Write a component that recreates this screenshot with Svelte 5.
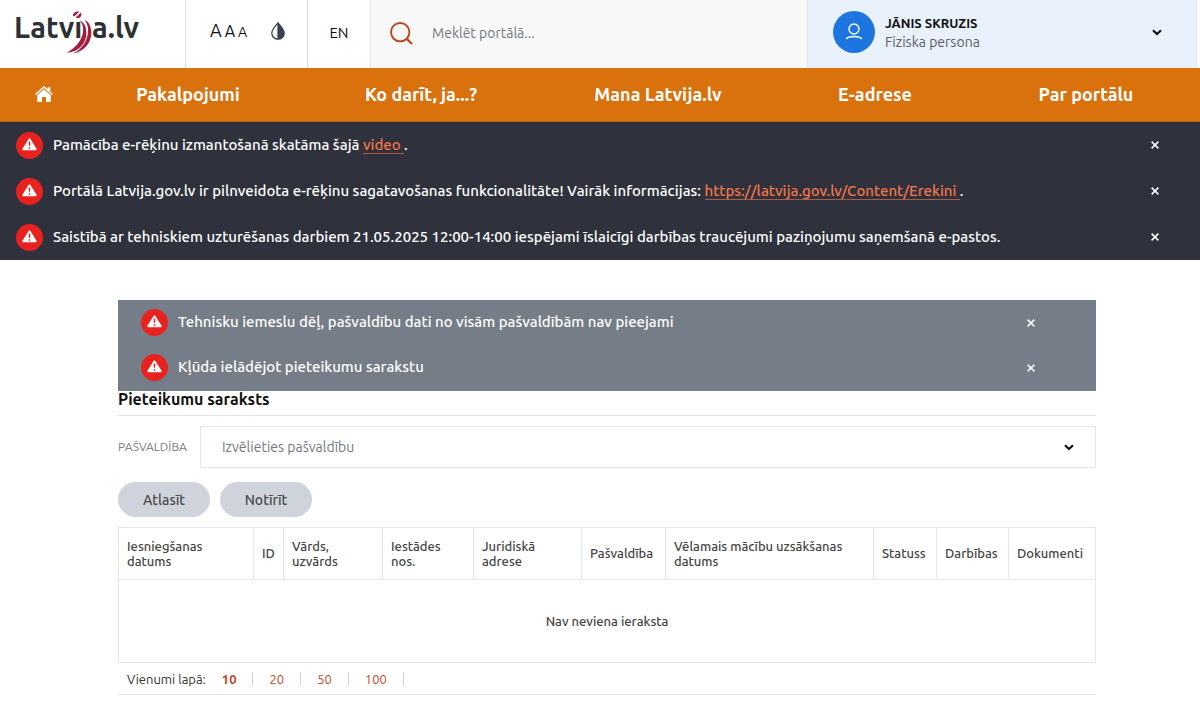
<script>
  const nav = ['Pakalpojumi', 'Ko darīt, ja...?', 'Mana Latvija.lv', 'E-adrese', 'Par portālu'];

  let siteNotices = $state([
    { text: 'Pamācība e-rēķinu izmantošanā skatāma šajā', link: 'video' },
    {
      text: 'Portālā Latvija.gov.lv ir pilnveidota e-rēķinu sagatavošanas funkcionalitāte! Vairāk informācijas:',
      link: 'https://latvija.gov.lv/Content/Erekini'
    },
    { text: 'Saistībā ar tehniskiem uzturēšanas darbiem 21.05.2025 12:00-14:00 iespējami īslaicīgi darbības traucējumi paziņojumu saņemšanā e-pastos.' }
  ]);

  let pageNotices = $state([
    { text: 'Tehnisku iemeslu dēļ, pašvaldību dati no visām pašvaldībām nav pieejami' },
    { text: 'Kļūda ielādējot pieteikumu sarakstu' }
  ]);

  const columns = [
    { title: 'Iesniegšanas\ndatums', share: 135 },
    { title: 'ID', share: 30 },
    { title: 'Vārds,\nuzvārds', share: 99 },
    { title: 'Iestādes\nnos.', share: 91 },
    { title: 'Juridiskā\nadrese', share: 108 },
    { title: 'Pašvaldība', share: 84 },
    { title: 'Vēlamais mācību uzsākšanas\ndatums', share: 208 },
    { title: 'Statuss', share: 63 },
    { title: 'Darbības', share: 72 },
    { title: 'Dokumenti', share: 87 }
  ];
  const total = columns.reduce((sum, c) => sum + c.share, 0);

  const sizes = [10, 20, 50, 100];
  let size = $state(10);
</script>

{#snippet chevron()}
  <svg class="chevron" viewBox="0 0 10 7" width="10" height="7" aria-hidden="true">
    <path d="M1 1.2 L5 5 L9 1.2" fill="none" stroke="#111" stroke-width="2.2" />
  </svg>
{/snippet}

{#snippet notice(item, close)}
  <div class="notice">
    <svg class="alert" viewBox="0 0 27 27" width="27" height="27" aria-hidden="true">
      <circle cx="13.5" cy="13.5" r="13.5" fill="#e8231f" />
      <path d="M13.5 7.3 L19.8 17.3 H7.2 Z" fill="#fff" stroke="#fff" stroke-width="1.8" stroke-linejoin="round" />
      <path d="M13.5 9.4 V13.8 M13.5 15.2 V16.8" stroke="#e8231f" stroke-width="1.5" />
    </svg>
    <p>
      {item.text}
      {#if item.link}<a href="#notice">{item.link}&nbsp;</a>.{/if}
    </p>
    <button class="close" type="button" aria-label="Aizvērt" onclick={close}>
      <svg viewBox="0 0 8 8" width="8" height="8" aria-hidden="true">
        <path d="M0.6 0.6 L7.4 7.4 M7.4 0.6 L0.6 7.4" stroke="#fff" stroke-width="1.5" />
      </svg>
    </button>
  </div>
{/snippet}

<header class="top">
  <a class="logo" href="#home" aria-label="Latvija.lv">
    <svg viewBox="0 0 128 48" width="128" height="48">
      <text x="-2" y="30">Latvı</text>
      <text x="76" y="30">a.lv</text>
      <g fill="#a61c3c">
        <path d="M57 7 C57.4 4.4 60.6 3 63.4 3.8 L58.2 8.6 C57.4 8.3 57 7.8 57 7 Z" />
        <path d="M64.8 4.4 C66 6.2 65.4 8.4 63.8 9.4 C62.4 10.2 60.8 10 59.8 9.4 Z" />
        <path d="M63.4 12.4 C69.6 17 69.6 34.5 51 44.4 C61.4 44.6 70.2 35.6 70.4 25.4 C70.5 18.4 67.8 13.4 63.4 12.4 Z" />
        <path d="M68.4 12.2 C75 18 73.6 37.6 57 45.6 C68.6 43.4 75.4 34 75.3 25.2 C75.2 18.2 72.6 12.8 68.4 12.2 Z" />
      </g>
    </svg>
  </a>
  <div class="access">
    <div class="sizes">
      <button class="a-large" type="button">A</button>
      <button class="a-medium" type="button">A</button>
      <button class="a-small" type="button">A</button>
    </div>
    <button class="contrast" type="button" aria-label="Kontrasts">
      <svg viewBox="0 0 14 18" width="14" height="18" aria-hidden="true">
        <path d="M7 0.8 C9 3.6 13.2 7.2 13.2 11 C13.2 14.8 10.4 17.2 7 17.2 C3.6 17.2 0.8 14.8 0.8 11 C0.8 7.2 5 3.6 7 0.8 Z" fill="#fff" stroke="#3a3f50" stroke-width="1.3" />
        <path d="M6.4 0.8 H7 C9 3.6 13.2 7.2 13.2 11 C13.2 14.8 10.4 17.2 6.4 17.2 Z" fill="#3a3f50" />
      </svg>
    </button>
  </div>
  <a class="lang" href="#en">EN</a>
  <form class="search" role="search">
    <button type="submit" aria-label="Meklēt">
      <svg viewBox="0 0 23 23" width="23" height="23" aria-hidden="true">
        <circle cx="10.2" cy="10.2" r="9.2" fill="none" stroke="#c1441f" stroke-width="1.9" />
        <path d="M16.6 16.6 L22 22" stroke="#c1441f" stroke-width="2.2" />
      </svg>
    </button>
    <input type="text" placeholder="Meklēt portālā..." aria-label="Meklēt portālā" />
  </form>
  <button class="user" type="button">
    <svg viewBox="0 0 42 42" width="42" height="42" aria-hidden="true">
      <circle cx="21" cy="21" r="21" fill="#1d76e0" />
      <g fill="none" stroke="#fff" stroke-width="1.4">
        <circle cx="21" cy="18" r="5" />
        <path d="M13.2 28 C15.5 24.6 26.5 24.6 28.8 28" />
      </g>
    </svg>
    <span class="who">
      <strong>JĀNIS SKRUZIS</strong>
      <span>Fiziska persona</span>
    </span>
    {@render chevron()}
  </button>
</header>

<nav>
  <a href="#home" aria-label="Sākums">
    <svg viewBox="0 0 18 16" width="18" height="16" aria-hidden="true">
      <path d="M9 0 L12.6 3.3 V1.2 H15.3 V5.7 L18 8 L17 9 L9 2 L1 9 L0 8 Z" fill="#fff" />
      <path d="M9 3.2 L15.8 9.2 V16 H11 V11 H7 V16 H2.2 V9.2 Z" fill="#fff" />
    </svg>
  </a>
  {#each nav as item}
    <a href="#nav">{item}</a>
  {/each}
</nav>

<section class="site-notices">
  {#each siteNotices as item, i}
    {@render notice(item, () => siteNotices.splice(i, 1))}
  {/each}
</section>

<main>
  <section class="page-notices">
    {#each pageNotices as item, i}
      {@render notice(item, () => pageNotices.splice(i, 1))}
    {/each}
  </section>

  <h1>Pieteikumu saraksts</h1>

  <div class="filter">
    <label for="municipality">PAŠVALDĪBA</label>
    <div class="select">
      <select id="municipality">
        <option>Izvēlieties pašvaldību</option>
      </select>
      {@render chevron()}
    </div>
  </div>

  <div class="actions">
    <button type="button">Atlasīt</button>
    <button type="button">Notīrīt</button>
  </div>

  <table>
    <colgroup>
      {#each columns as c}
        <col style="width: {(c.share / total) * 100}%" />
      {/each}
    </colgroup>
    <thead>
      <tr>
        {#each columns as c}
          <th scope="col">{c.title}</th>
        {/each}
      </tr>
    </thead>
    <tbody>
      <tr><td colspan={columns.length}>Nav neviena ieraksta</td></tr>
    </tbody>
  </table>

  <div class="pager">
    <span>Vienumi lapā:</span>
    <ul>
      {#each sizes as n}
        <li><button type="button" class:current={n === size} onclick={() => (size = n)}>{n}</button></li>
      {/each}
    </ul>
  </div>
</main>

<style>
  :global(body) {
    background: #fff;
    color: #111;
    font: 14px/16px Ubuntu, 'Noto Sans', sans-serif;
  }
  :global(*) {
    box-sizing: border-box;
  }
  button {
    border: 0;
    padding: 0;
    background: none;
    color: inherit;
    font: inherit;
    cursor: pointer;
  }
  a {
    color: inherit;
    text-decoration: none;
  }
  svg {
    display: block;
    flex: none;
  }

  .top {
    display: flex;
    height: 68px;
    padding-right: 3px;
  }
  .logo {
    flex: none;
    width: 186px;
    padding: 8px 0 0 16px;
    border-right: 1px solid #dde0e8;
  }
  .logo svg {
    overflow: visible;
  }
  .logo text {
    font: 700 29px Ubuntu, 'Open Sans', sans-serif;
    fill: #2e3133;
  }
  .access {
    flex: none;
    display: flex;
    align-items: center;
    justify-content: space-between;
    width: 122px;
    padding: 0 22px 6px 24px;
    border-right: 1px solid #d5d8df;
  }
  .sizes {
    display: flex;
    align-items: baseline;
    gap: 3px;
  }
  .a-large {
    font-size: 18px;
  }
  .a-medium {
    font-size: 16px;
  }
  .a-small {
    font-size: 14px;
  }
  .lang {
    flex: none;
    display: flex;
    align-items: center;
    justify-content: center;
    width: 63px;
    padding-bottom: 2px;
    border-right: 1px solid #e6e8f0;
    font-size: 15px;
  }
  .search {
    flex: 1;
    display: flex;
    align-items: center;
    gap: 19px;
    padding: 0 19px 2px;
    background: #f8f8f8;
  }
  .search input {
    flex: 1;
    min-width: 0;
    border: 0;
    padding: 0;
    background: none;
    font: inherit;
  }
  .search input::placeholder {
    color: #737982;
    opacity: 1;
  }
  .user {
    flex: none;
    display: flex;
    align-items: center;
    gap: 10px;
    width: 33%;
    max-width: 390px;
    padding: 0 34px 4px 25px;
    border: solid #dfe5ef;
    border-width: 0 1px;
    background: #e9f1fc;
    text-align: left;
  }
  .who {
    flex: 1;
    display: grid;
    gap: 3px;
  }
  .who strong {
    font-size: 13px;
    font-weight: 700;
  }
  .who span {
    color: #5c6066;
  }

  nav {
    display: grid;
    grid-template-columns: 88fr 200fr 266fr 208fr 226fr 196fr;
    align-items: center;
    justify-items: center;
    height: 54px;
    padding: 0 16px 2px 0;
    border-bottom: 1px solid #c56a12;
    background: #d9710d;
    color: #fff;
    font-size: 18px;
    font-weight: 700;
    line-height: 24px;
  }

  .site-notices {
    background: #2f323d;
    padding: 0 41px 0 16px;
  }
  .page-notices {
    background: #757d88;
    padding: 0 61px 1px 23px;
  }
  .notice {
    display: flex;
    align-items: center;
    gap: 10px;
    height: 46px;
    color: #fff;
    font-size: 15px;
    font-weight: 500;
  }
  .page-notices .notice {
    height: 45px;
  }
  .notice p {
    flex: 1;
    margin: 0;
    padding-bottom: 1px;
  }
  .notice a {
    border-bottom: 1px solid #b3593c;
    color: #f0754a;
  }
  .close {
    display: grid;
    place-items: center;
    width: 8px;
    height: 24px;
  }

  main {
    padding: 40px 104px 0 118px;
  }
  h1 {
    margin: 0;
    padding-bottom: 7px;
    border-bottom: 1px solid #e4e5ea;
    font-size: 16px;
    font-weight: 700;
    line-height: 17px;
  }
  .filter {
    display: flex;
    align-items: center;
    gap: 13px;
    padding: 10px 0 14px;
    color: #737982;
  }
  .filter label {
    flex: none;
    width: 69px;
    font-size: 12px;
  }
  .select {
    flex: 1;
    display: grid;
    align-items: center;
  }
  .select > :global(*) {
    grid-area: 1 / 1;
  }
  .select .chevron {
    justify-self: end;
    margin-right: 22px;
    pointer-events: none;
  }
  select {
    width: 100%;
    height: 42px;
    padding: 0 21px;
    border: 1px solid #e4e5ea;
    border-radius: 0;
    appearance: none;
    background: #fff;
    color: inherit;
    font: inherit;
  }
  .actions {
    display: flex;
    gap: 10px;
    margin-bottom: 10px;
  }
  .actions button {
    min-width: 92px;
    height: 35px;
    border-radius: 18px;
    background: #cfd4dc;
    color: #4a4a4a;
    font-weight: 500;
  }

  table {
    width: 100%;
    border-collapse: collapse;
    table-layout: fixed;
    color: #444;
    font-size: 13px;
    line-height: 15px;
  }
  th,
  td {
    border: 1px solid #e6e6ee;
    font-weight: 500;
  }
  th {
    height: 52px;
    padding: 0 8px;
    text-align: left;
    white-space: pre;
  }
  td {
    height: 83px;
    padding: 0;
    text-align: center;
  }

  .pager {
    display: flex;
    align-items: center;
    gap: 16px;
    height: 32px;
    padding-left: 9px;
    border-bottom: 1px solid #e6e8f0;
    font-size: 13px;
    color: #333;
  }
  .pager ul {
    display: flex;
    gap: 16px;
    margin: 0;
    padding: 0;
    list-style: none;
  }
  .pager li {
    display: flex;
    align-items: center;
    gap: 16px;
    color: #bf4a2c;
  }
  .pager li::after {
    content: '';
    width: 1px;
    height: 13px;
    background: #cdd3dd;
  }
  .current {
    font-weight: 700;
  }
</style>
